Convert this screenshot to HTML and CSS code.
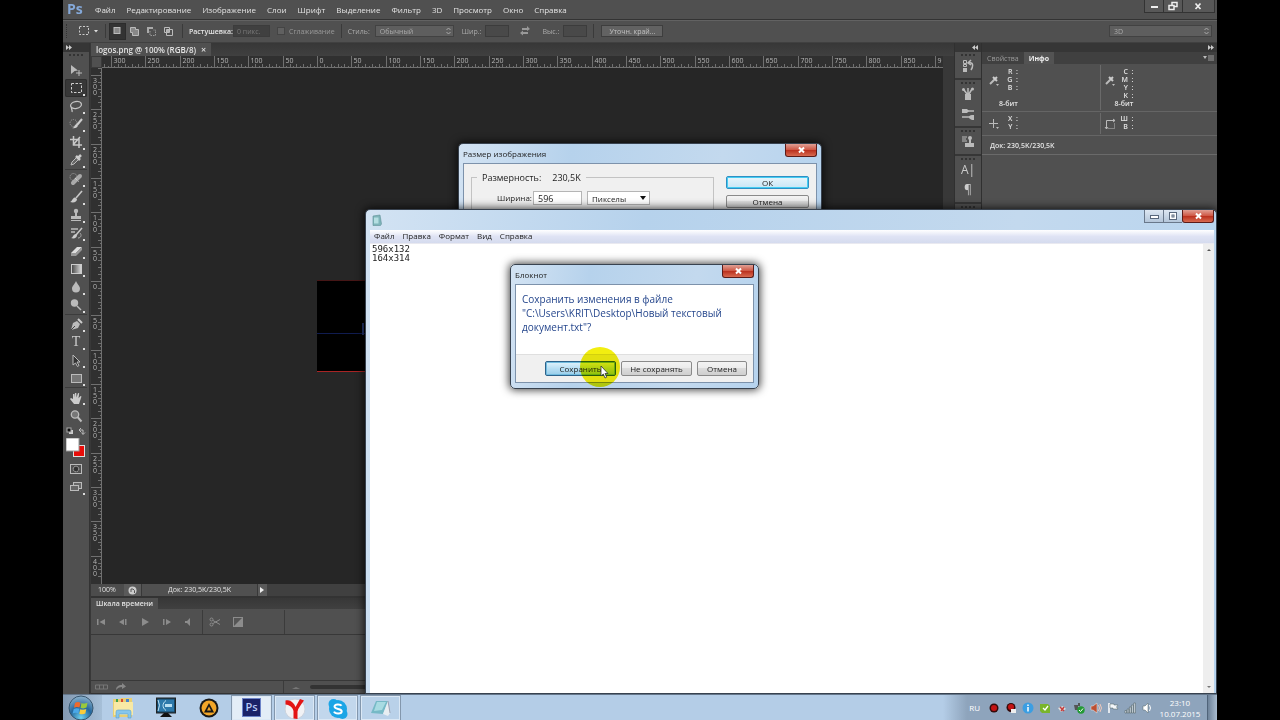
FILE: index.html
```html
<!DOCTYPE html>
<html lang="ru">
<head>
<meta charset="utf-8">
<title>logos.png @ 100% (RGB/8)</title>
<link rel="stylesheet" href="styles.css">
</head>
<body>
<div class="screen">
  <div class="app">
    <header class="menubar">
      <span class="brand">Ps</span>
      <nav class="menus">
        <button>Файл</button><button>Редактирование</button><button>Изображение</button><button>Слои</button><button>Шрифт</button><button>Выделение</button><button>Фильтр</button><button>3D</button><button>Просмотр</button><button>Окно</button><button>Справка</button>
      </nav>
      <div class="app-controls">
        <button aria-label="Свернуть"><svg width="18" height="12"><path d="M6 7h7" stroke="#eee" stroke-width="2"/></svg></button>
        <button aria-label="Восстановить"><svg width="18" height="12" fill="#555" stroke="#eee" stroke-width="1.5"><path d="M8 2.500h5v4h-5z"/><path d="M5 5.500h5v4h-5z"/></svg></button>
        <button class="wide" aria-label="Закрыть"><svg width="20" height="12"><path d="M7.500 3.500l5 5.500M12.500 3.500l-5 5.500" stroke="#eee" stroke-width="1.700"/></svg></button>
      </div>
    </header>

    <div class="options">
      <i class="vgrip"></i>
      <button class="tool-preset" aria-label="Прямоугольная область"><svg width="24" height="12"><rect x="1.500" y="1.500" width="9" height="8" fill="none" stroke="#ccc" stroke-dasharray="2 1.500"/><path d="M16 5h4l-2 2.500z" fill="#ddd"/></svg></button>
      <i class="vsep"></i>
      <div class="modes">
        <button class="on" aria-label="Новая область"><svg width="14" height="14"><rect x="4" y="3.500" width="6" height="6" fill="#888" stroke="#bbb"/></svg></button>
        <button aria-label="Добавить"><svg width="14" height="14" fill="#888" stroke="#bbb"><path d="M3.500 3.500h5v2h3v6h-6v-3h-2z"/></svg></button>
        <button aria-label="Вычесть"><svg width="14" height="14"><path d="M3 3h6v2H5v4H3z" fill="#aaa"/><path d="M6 7v4.500h5.500V6H9" fill="none" stroke="#999" stroke-dasharray="1.500 1"/></svg></button>
        <button aria-label="Пересечение"><svg width="14" height="14" fill="none" stroke="#bbb"><path d="M3.500 3.500h5v5h-5z"/><path d="M5.500 5.500h6v6h-6z"/><path d="M6 6h2v2H6z" fill="#999"/></svg></button>
      </div>
      <i class="vsep"></i>
      <label class="field bright" for="feather">Растушевка:</label><input class="box feather" id="feather" value="0 пикс.">
      <input type="checkbox" class="tick" id="aa"><label class="aa" for="aa">Сглаживание</label>
      <i class="vsep"></i>
      <label for="style">Стиль:</label>
      <span class="pick style-pick"><select id="style"><option>Обычный</option></select><svg width="5" height="8"><path d="M.5 3L2.500 1l2 2M.5 5l2 2 2-2" fill="none" stroke="#aaa"/></svg></span>
      <label class="wlabel" for="w">Шир.:</label><input class="box size" id="w">
      <button class="swap" aria-label="Поменять местами"><svg width="12" height="10" fill="#999"><path d="M3 2h5V0l3 3-3 2V4H3zM9 6H4V4.500L1 7l3 2.500V8h5z"/></svg></button>
      <label for="h">Выс.:</label><input class="box size" id="h">
      <i class="vsep"></i>
      <button class="refine">Уточн. край...</button>
      <span class="pick workspace-pick"><select aria-label="Рабочая среда"><option>3D</option></select><svg width="5" height="8"><path d="M.5 3L2.500 1l2 2M.5 5l2 2 2-2" fill="none" stroke="#aaa"/></svg></span>
    </div>

    <div class="workspace">
      <aside class="tools">
        <div class="strip-head"><svg width="6" height="5" fill="#ccc"><path d="M0 0l3 2.500L0 5zM3 0l3 2.500L3 5z"/></svg></div>
        <i class="grip"></i>
        <button aria-label="Перемещение"><svg width="18" height="18"><path d="M4 4l7 5.500-3.500.5-1 1L4 13z" fill="#bbb"/><path d="M9 12h6M12 9v6" stroke="#bbb"/></svg></button>
        <button class="on more" aria-label="Прямоугольная область"><svg width="18" height="18"><rect x="4.500" y="4.500" width="10" height="9" fill="none" stroke="#d0d0d0" stroke-dasharray="2.500 1.500"/></svg></button>
        <button class="more" aria-label="Лассо"><svg width="18" height="18" fill="none" stroke="#c5c5c5" stroke-width="1.300"><ellipse cx="9" cy="8" rx="5.500" ry="3.500" transform="rotate(-12 9 8)"/><path d="M5 10c-2 1 1 3 0 5"/></svg></button>
        <button class="more" aria-label="Быстрое выделение"><svg width="18" height="18"><circle cx="6.500" cy="8" r="3.500" fill="none" stroke="#aaa" stroke-dasharray="1 1.200"/><path d="M15 4l-5 6" stroke="#ccc" stroke-width="2"/><path d="M5 13c3 0 2-4 5-4 2 2 0 5-5 4z" fill="#ccc"/></svg></button>
        <button class="more" aria-label="Рамка"><svg width="18" height="18" fill="none" stroke="#c8c8c8" stroke-width="1.500"><path d="M6.500 3v9H15M3 6.500h9V15M6 12l7-8"/></svg></button>
        <button class="more" aria-label="Пипетка"><svg width="18" height="18"><path d="M4 14l1-3 5-5 2 2-5 5z" fill="#666" stroke="#bbb"/><path d="M9 5l4 4M11 7l3-3" stroke="#ccc" stroke-width="2.500"/></svg></button>
        <hr>
        <button class="more" aria-label="Восстанавливающая кисть"><svg width="18" height="18"><circle cx="6.500" cy="7" r="3.500" fill="none" stroke="#aaa" stroke-dasharray="1 1"/><path d="M6 13l7-7" stroke="#aaa" stroke-width="4" stroke-linecap="round"/><path d="M8 8l4 4" stroke="#ddd" stroke-dasharray="1 1"/></svg></button>
        <button class="more" aria-label="Кисть"><svg width="18" height="18"><path d="M15 3l-6 7" stroke="#c8c8c8" stroke-width="1.600"/><path d="M3 14c2 0 2-4 5-4.500L10 11c0 3-3 4-7 3z" fill="#ccc"/></svg></button>
        <button class="more" aria-label="Штамп"><svg width="18" height="18" fill="#bbb"><circle cx="9" cy="5" r="2.200"/><path d="M8 6h2v4h4v3H4v-3h4z"/><path d="M4 14h10v1H4z"/></svg></button>
        <button class="more" aria-label="Архивная кисть"><svg width="18" height="18"><path d="M4 5h7M4 8h4" stroke="#bbb" stroke-width="1.500"/><path d="M15 4l-6 7" stroke="#c8c8c8" stroke-width="1.500"/><path d="M4 14c2 0 2-4 5-4l1 1c0 3-3 4-6 3z" fill="#ccc"/><path d="M13 9c2 2 1 5-2 5" fill="none" stroke="#aaa"/></svg></button>
        <button class="more" aria-label="Ластик"><svg width="18" height="18"><path d="M4 11l6-6h5l-6 6z" fill="#ddd"/><path d="M4 11h5v3H4zM9 11l6-6v3l-6 6z" fill="#999"/></svg></button>
        <button class="more" aria-label="Градиент"><svg width="18" height="18"><defs><linearGradient id="gr"><stop stop-color="#444"/><stop offset="1" stop-color="#ddd"/></linearGradient></defs><rect x="4.500" y="4.500" width="10" height="9" fill="url(#gr)" stroke="#ccc"/></svg></button>
        <button class="more" aria-label="Размытие"><svg width="18" height="18"><path d="M9 3c1 3 4 5 4 7.500a4 4 0 0 1-8 0C5 8 8 6 9 3z" fill="#bbb"/></svg></button>
        <button class="more" aria-label="Осветлитель"><svg width="18" height="18"><circle cx="7.500" cy="7" r="3.700" fill="#bbb"/><path d="M10 10l4 4" stroke="#bbb" stroke-width="1.500"/></svg></button>
        <hr>
        <button class="more" aria-label="Перо"><svg width="18" height="18"><path d="M4 15l2-7 4-2 3 3-2 4z" fill="#bbb"/><path d="M4 15l4-4" stroke="#444"/><path d="M11 4l4 4" stroke="#ccc" stroke-width="2"/></svg></button>
        <button class="more glyph" aria-label="Текст">T</button>
        <button class="more" aria-label="Выделение контура"><svg width="18" height="18"><path d="M6 4v10l2.500-2 2 3.500 1.500-1-2-3.500h3z" fill="#333" stroke="#bbb"/></svg></button>
        <button class="more" aria-label="Прямоугольник"><svg width="18" height="18"><rect x="4.500" y="5.500" width="10" height="8" fill="#777" stroke="#bbb"/></svg></button>
        <hr>
        <button class="more" aria-label="Рука"><svg width="18" height="18"><path d="M7 16l-4-5 1-1 2 1V6h1.300v3.500L8 5h1.300l.2 4.500L11 5l1.200.3-.7 5L13.500 8l1 .5L12 16z" fill="#ccc"/></svg></button>
        <button aria-label="Масштаб"><svg width="18" height="18"><circle cx="8" cy="8.500" r="3.700" fill="#777" stroke="#bbb" stroke-width="1.300"/><path d="M10.500 11l4 4.500" stroke="#bbb" stroke-width="2"/></svg></button>
        <div class="mini"><svg width="8" height="8"><rect x="3" y="3" width="4" height="4" fill="#ccc"/><rect x="1" y="1" width="4" height="4" fill="#111" stroke="#aaa"/></svg><svg width="8" height="8"><path d="M2 3h3v4M3 1L1 3l2 2M3.500 5.500l1.500 2 2-2" fill="none" stroke="#bbb"/></svg></div>
        <button class="colors" aria-label="Основной и фоновый цвет"><svg width="20" height="20"><rect x="7.500" y="7.500" width="11" height="11" fill="#e80c08" stroke="#ddd"/><rect x="0" y="0" width="13" height="13" fill="#fff" stroke="#999"/></svg></button>
        <button aria-label="Быстрая маска"><svg width="18" height="18" fill="none" stroke="#bbb"><rect x="3.500" y="4.500" width="11" height="9"/><circle cx="9" cy="9" r="2.800" fill="#333" stroke-dasharray="1.500 .7"/></svg></button>
        <button class="more" aria-label="Режим экрана"><svg width="18" height="18" fill="#666" stroke="#bbb"><rect x="6.500" y="4.500" width="8" height="6"/><rect x="3.500" y="7.500" width="8" height="5"/></svg></button>
      </aside>

      <main class="document">
        <div class="tabs"><div class="tab doc-tab">logos.png @ 100% (RGB/8)<button class="x" aria-label="Закрыть">×</button></div></div>
        <div class="view">
          <i class="corner"></i>
          <svg class="ruler-h" id="rulerH"></svg>
          <svg class="ruler-v" id="rulerV"></svg>
          <div class="canvas"><div class="image"><i class="mark"></i></div></div>
        </div>
        <div class="status">
          <span class="zoomlvl">100%</span>
          <span class="disc"><svg width="9" height="9"><circle cx="4.500" cy="4.500" r="4" fill="#ccc"/><path d="M3 6V3h2l1.500 1.500V7" fill="none" stroke="#555"/></svg></span>
          <span class="docsize">Док: 230,5K/230,5K</span>
          <button class="next" aria-label="Далее"><svg width="6" height="8"><path d="M1 1l4 3-4 3z" fill="#eee"/></svg></button>
        </div>
        <section class="timeline">
          <div class="tabs"><div class="tab">Шкала времени</div></div>
          <div class="transport">
            <button aria-label="В начало"><svg width="10" height="8" fill="#8c8c8c"><path d="M1 1h1.500v6H1zM9 1v6L3.500 4z"/></svg></button>
            <button aria-label="Назад"><svg width="10" height="8" fill="#8c8c8c"><path d="M6 1v6L1 4zM7 1h1.500v6H7z"/></svg></button>
            <button aria-label="Воспроизвести"><svg width="10" height="8" fill="#8c8c8c"><path d="M2 0l7 4-7 4z"/></svg></button>
            <button aria-label="Вперед"><svg width="10" height="8" fill="#8c8c8c"><path d="M1 1h1.500v6H1zM4 1v6l5-3z"/></svg></button>
            <button aria-label="Звук"><svg width="10" height="8" fill="#8c8c8c"><path d="M1 3h2l3-3v8L3 5H1z"/></svg></button>
            <i class="tsep"></i>
            <button aria-label="Разделить"><svg width="12" height="10" fill="none" stroke="#8c8c8c"><path d="M4 3.500l7 4M4 6.500l7-4"/><circle cx="2.500" cy="2.500" r="1.500"/><circle cx="2.500" cy="7.500" r="1.500"/></svg></button>
            <button aria-label="Переход"><svg width="10" height="10"><rect x=".5" y=".5" width="9" height="9" fill="#555" stroke="#8c8c8c"/><path d="M9 1v8H1z" fill="#8c8c8c"/></svg></button>
            <i class="tsep far"></i>
          </div>
          <div class="track"></div>
          <div class="tfoot"><svg width="13" height="6" fill="none" stroke="#777"><path d="M.5 1h12v4H.5zM4.500 1v4M8.500 1v4"/></svg><svg width="10" height="8" fill="#888"><path d="M0 7c0-3 2-5 6-5V0l4 3.500L6 6V4C3 4 2 5 0 7z"/></svg><i class="tsep foot"></i><svg width="8" height="6"><path d="M0 5h8L4 3z" fill="#777"/></svg><i class="slider"></i></div>
        </section>
      </main>

      <aside class="dock">
        <div class="strip-head end"><svg width="6" height="5" fill="#ccc"><path d="M3 0L0 2.500 3 5zM6 0L3 2.500 6 5z"/></svg></div>
        <div class="group"><i class="grip"></i><button aria-label="История"><svg width="18" height="18"><path d="M4.500 3.500h3v3h-3zM4.500 7.500h3v2h-3z" fill="none" stroke="#bbb"/><path d="M4 11h4v4H4z" fill="#bbb"/><path d="M10 6c5-1 4 4 2 7M12 3L9 6l3 2" fill="none" stroke="#bbb" stroke-width="1.500"/></svg></button></div>
        <div class="group"><i class="grip"></i><button aria-label="Кисти"><svg width="18" height="18"><path d="M6 9h6v6H6z" fill="#bbb"/><path d="M8 9L5 5M9 9V3M10 9l3-5" stroke="#bbb" stroke-width="1.500"/><circle cx="4.500" cy="4.500" r="1.500" fill="#bbb"/><circle cx="13.500" cy="4" r="1.500" fill="#bbb"/></svg></button><button aria-label="Наборы кистей"><svg width="18" height="18"><path d="M3 6h12M3 12h12" stroke="#bbb" stroke-width="1.500"/><path d="M3 4h5l2 2-2 2H3zM15 10h-2c-2 0-3 1-3 2s1 3 5 3z" fill="#bbb"/></svg></button></div>
        <div class="group"><i class="grip"></i><button aria-label="Источник клонов"><svg width="18" height="18"><path d="M3 4h5M3 6h4M3 8h5" stroke="#bbb"/><circle cx="11" cy="5" r="2" fill="#bbb"/><path d="M10 5h2v5h3v4H6v-4h4z" fill="#bbb"/></svg></button></div>
        <div class="group"><i class="grip"></i><button class="ch" aria-label="Символ">A|</button><button class="ch" aria-label="Абзац">¶</button></div>
        <div class="group"><i class="grip"></i></div>
      </aside>

      <aside class="panels">
        <div class="strip-head end"><svg width="6" height="5" fill="#ccc"><path d="M0 0l3 2.500L0 5zM3 0l3 2.500L3 5z"/></svg></div>
        <div class="ptabs"><button>Свойства</button><button class="on">Инфо</button><svg width="12" height="6"><path d="M0 1h4L2 4z" fill="#bbb"/><path d="M5 1h6M5 3h6M5 5h6" stroke="#999"/></svg></div>
        <div class="info tall">
          <div class="cell"><svg width="12" height="12"><path d="M2 9l5-5" stroke="#bbb" stroke-width="2"/><path d="M5 2l4 4M7 4l2-2" stroke="#ccc" stroke-width="2"/><path d="M8 9h3l-1.500 2z" fill="#bbb"/></svg><div class="vals"><span>R&nbsp; :</span><span>G&nbsp; :</span><span>B&nbsp; :</span></div><b>8-бит</b></div>
          <div class="cell"><svg width="12" height="12"><path d="M2 9l5-5" stroke="#bbb" stroke-width="2"/><path d="M5 2l4 4M7 4l2-2" stroke="#ccc" stroke-width="2"/><path d="M8 9h3l-1.500 2z" fill="#bbb"/></svg><div class="vals"><span>C&nbsp; :</span><span>M&nbsp; :</span><span>Y&nbsp; :</span><span>K&nbsp; :</span></div><b>8-бит</b></div>
        </div>
        <div class="info short">
          <div class="cell"><svg width="12" height="12"><path d="M5.500 1v9M1 5.500h9" stroke="#bbb"/><path d="M8 9h3l-1.500 2z" fill="#bbb"/></svg><div class="vals"><span>X&nbsp; :</span><span>Y&nbsp; :</span></div></div>
          <div class="cell"><svg width="12" height="12" fill="none" stroke="#bbb"><path d="M2.500 11V2.500H11M1 9l1.500 2L4 9M9 1l2 1.500L9 4"/><path d="M4.500 10.500h6v-6" stroke-dasharray="1 1"/></svg><div class="vals"><span>Ш&nbsp; :</span><span>В&nbsp; :</span></div></div>
        </div>
        <div class="doc">Док: 230,5K/230,5K</div>
      </aside>
    </div>
  </div>

  <section class="win resize-win">
    <header class="title"><span>Размер изображения</span><button class="close" aria-label="Закрыть"><svg width="9" height="8"><path d="M2 1.500l5 5M7 1.500l-5 5" stroke="#fff" stroke-width="2"/></svg></button></header>
    <div class="body resize-body">
      <fieldset><legend>Размерность:<span>230,5K</span></legend>
        <label for="width">Ширина:</label><input id="width" value="596">
        <span class="unit"><select aria-label="Единицы"><option>Пикселы</option></select><svg width="6" height="4"><path d="M0 0h6L3 4z" fill="#111"/></svg></span>
      </fieldset>
      <div class="side"><button class="btn default">ОК</button><button class="btn">Отмена</button></div>
    </div>
  </section>

  <section class="win notepad">
    <header class="title">
      <svg width="10" height="12"><path d="M1 2l7-1 1.500 9-1 1.500H1z" fill="#7fb5ba" stroke="#5f9097" stroke-width=".6"/><path d="M2 3.500h4.500v6H2z" fill="#b5dfe2"/></svg>
      <div class="controls"><button aria-label="Свернуть"><svg width="18" height="12"><rect x="5.500" y="5.500" width="8" height="3" fill="#fff" stroke="#59687c"/></svg></button><button aria-label="Развернуть"><svg width="18" height="12"><rect x="5.500" y="2.500" width="7" height="7" fill="#fff" stroke="#59687c"/><rect x="8" y="5" width="2" height="2" fill="none" stroke="#59687c"/></svg></button><button class="close" aria-label="Закрыть"><svg width="9" height="8"><path d="M2 1.500l5 5M7 1.500l-5 5" stroke="#fff" stroke-width="2"/></svg></button></div>
    </header>
    <nav class="nmenu"><button>Файл</button><button>Правка</button><button>Формат</button><button>Вид</button><button>Справка</button></nav>
    <div class="edit"><textarea aria-label="Текст" spellcheck="false">596x132
164x314</textarea>
      <div class="scroll"><svg width="6" height="4"><path d="M1 3h4L3 1z" fill="#555"/></svg><svg width="6" height="4"><path d="M1 1h4L3 3z" fill="#777"/></svg></div></div>
  </section>

  <section class="win save-win">
    <header class="title"><span>Блокнот</span><button class="close" aria-label="Закрыть"><svg width="9" height="8"><path d="M2 1.500l5 5M7 1.500l-5 5" stroke="#fff" stroke-width="2"/></svg></button></header>
    <div class="body">
      <p>Сохранить изменения в файле "C:\Users\KRIT\Desktop\Новый текстовый документ.txt"?</p>
      <footer><button class="btn hot">Сохранить</button><button class="btn">Не сохранять</button><button class="btn cancel">Отмена</button></footer>
    </div>
  </section>
  <div class="halo"></div>
  <svg class="cursor" width="9" height="14"><path d="M1 1v10l2.300-2 1.700 4 1.700-.8L5 8.500h3z" fill="#fff" stroke="#333" stroke-width=".8"/></svg>

  <footer class="taskbar">
    <button class="start" aria-label="Пуск"><svg width="26" height="26"><defs><radialGradient id="orb" cx=".5" cy=".9" r=".9"><stop stop-color="#6fd2f0"/><stop offset=".5" stop-color="#23679e"/><stop offset="1" stop-color="#8fb3cd"/></radialGradient></defs><circle cx="13" cy="13" r="12" fill="url(#orb)" stroke="#37566f"/><path d="M7 8c2-1.500 4-1 5.500-.3l-1 4.800c-2-.8-3.500-.8-5.500.3z" fill="#ee6a2c"/><path d="M13.500 8c2 .9 4 .8 6-.2l-1 4.800c-2 1-4 1-6 .2z" fill="#9ac93c"/><path d="M5.700 14c2-1 3.800-1 5.600-.2l-1 4.500c-2-.8-4-.7-5.600.3z" fill="#4aa8e8"/><path d="M12.300 14.200c2 .8 4 .8 6-.1l-1 4.500c-2 1-4 .9-6 .1z" fill="#fbcc3a"/></svg></button>
    <button class="task" aria-label="Проводник"><svg width="26" height="26"><path d="M3 4h7l1-1h11v19H3z" fill="#e9cf72"/><path d="M4 7h19v13H4z" fill="#f8e9a5"/><path d="M6 4h2v3H6z" fill="#3fa34d"/><path d="M11 4h2v3h-2z" fill="#d94a34"/><path d="M16 4h3v3h-3z" fill="#4787ce"/><path d="M6 23v-6q0-2 2-2h11q2 0 2 2v6h-3v-4H9v4z" fill="#86c6ec" stroke="#5aa0cc" stroke-width=".6"/></svg></button>
    <button class="task" aria-label="Монитор"><svg width="26" height="26"><rect x="3.500" y="3" width="19" height="15" fill="#17425f" stroke="#222"/><rect x="5" y="4.500" width="16" height="12" fill="#2d79ab"/><path d="M5 5q3 5 0 11M13 5.500c-4 3-4 7 0 10" fill="none" stroke="#bfe3f5"/><path d="M12 9h7v3h-7z" fill="#b9dff2"/><path d="M11 18h4l4 4H7z" fill="#111"/></svg></button>
    <button class="task" aria-label="AIMP"><svg width="26" height="26"><circle cx="13" cy="13" r="9.500" fill="#181818"/><circle cx="13" cy="13" r="7.500" fill="#f2a629"/><path d="M8 17.500L13 8l5 9.500z" fill="#171717"/><path d="M11 15.500l2-4 2 4z" fill="#f2a629"/></svg></button>
    <button class="task open active" aria-label="Photoshop"><span class="psicon">Ps</span></button>
    <button class="task open" aria-label="Yandex"><svg width="26" height="26"><circle cx="13" cy="13" r="10" fill="#f1f2f5" stroke="#cbd3dd"/><path d="M3.500 4.500C9 3 12.500 8 13.500 11L18 3l4 1.500c-3 4-6 8-6.500 11V23l-4-.5V15C11 12 8 9 3.500 8.500z" fill="#e31515"/></svg></button>
    <button class="task open" aria-label="Skype"><svg width="26" height="26"><circle cx="13" cy="13" r="9" fill="#1aa5e6"/><circle cx="8.500" cy="8" r="5" fill="#1aa5e6"/><circle cx="17.500" cy="18" r="5" fill="#1aa5e6"/><path d="M16.500 9.800c-1-2-7-2-7 .8 0 3 7.200 1.600 7.200 4.700 0 3-6.500 3-7.700.4" fill="none" stroke="#fff" stroke-width="2"/></svg></button>
    <button class="task open note" aria-label="Блокнот"><svg width="26" height="26"><path d="M8 5h12l-5 13-12-1z" fill="#76b9c6"/><path d="M9 6h9l-4 8-8 1z" fill="#a8dbe2"/><path d="M20 5l2 12-2 3-5-2z" fill="#e8eef2"/><path d="M20 5l2 12" stroke="#889" stroke-width=".7"/></svg></button>
    <div class="tray">
      <span class="lang">RU</span>
      <div class="icons">
        <svg width="12" height="12"><circle cx="6" cy="6" r="4.500" fill="#350a0a"/><circle cx="6" cy="6" r="3" fill="#c31313"/></svg>
        <svg width="12" height="12"><circle cx="6" cy="5.500" r="4.500" fill="#350a0a"/><circle cx="6" cy="5" r="3" fill="#c31313"/><path d="M6 7h5v4H6z" fill="#eee"/></svg>
        <svg width="12" height="12"><circle cx="6" cy="6" r="5.500" fill="#3b9ee2"/><path d="M6 2.500v1.500M6 5v4.500" stroke="#fff" stroke-width="1.500"/></svg>
        <svg width="12" height="12"><path d="M1 2h8l2 2v7H3L1 9z" fill="#79b52b"/><path d="M4 6l2 2 3-4" fill="none" stroke="#fff" stroke-width="1.300"/></svg>
        <svg width="12" height="12"><path d="M2 6l5-2 3 3-5 3z" fill="#ddd"/><path d="M4 5l4 4M8 5L5 9" stroke="#c63e3e" stroke-width="1.500"/></svg>
        <svg width="12" height="12"><path d="M1 3h4V1h2v3H5v4H2z" fill="#555"/><circle cx="8" cy="8" r="3.700" fill="#239a35"/><path d="M6 8l1.500 1.500L10 6.500" fill="none" stroke="#fff"/></svg>
        <svg width="12" height="12"><path d="M1 4h2l4-3v10L3 8H1z" fill="#bc4f32" stroke="#eee" stroke-width=".5"/><path d="M8.500 3q2 3 0 6M10 2q3 4 0 8" fill="none" stroke="#f0c8ba"/></svg>
        <svg width="12" height="12"><path d="M2 1v10" stroke="#fff" stroke-width="1.500"/><path d="M3 2h4v1h4L9.500 5 11 7H6V6H3z" fill="#f4f7fa" stroke="#566" stroke-width=".5"/></svg>
        <svg width="12" height="12" fill="#dbe3ec" stroke="#455" stroke-width=".5"><path d="M1 8.500h1.600V11H1zM3.200 7h1.600v4H3.200zM5.400 5H7v6H5.400zM7.600 3h1.600v8H7.600zM9.800 1h1.600v10H9.800z"/></svg>
        <svg width="12" height="12"><path d="M2 4h2l3-3v10L4 8H2z" fill="#fff" stroke="#566" stroke-width=".5"/><path d="M8.500 3q2 3 0 6" fill="none" stroke="#fff"/></svg>
      </div>
      <div class="clock"><span>23:10</span><span>10.07.2015</span></div>
      <button class="show" aria-label="Свернуть все окна"></button>
    </div>
  </footer>
</div>
<script src="rulers.js"></script>
</body>
</html>
```
FILE: styles.css
```css
* { box-sizing: border-box; }
body { margin: 0; background: #000; font-family: "Open Sans", "Noto Sans", sans-serif; font-size: 8px; }
button, input, select, textarea { font: inherit; color: inherit; margin: 0; padding: 0; border: 0; background: none; border-radius: 0; appearance: none; outline: none; }
svg { display: block; flex: none; }
i { display: block; flex: none; }
.screen { position: relative; margin: 0 63px; min-height: 100vh; display: flex; flex-direction: column; overflow: hidden; }
.app { flex: 1; display: flex; flex-direction: column; background: #505050; color: #e2e2e2; }

.menubar { display: flex; height: 20px; border-bottom: 1px solid #333; }
.brand { width: 32px; padding-left: 4px; font: bold 14px/18px "Open Sans", sans-serif; color: #84a8d8; }
.menus { display: flex; flex: 1; gap: 11px; align-items: center; font-size: 8px; }
.app-controls { display: flex; height: 13px; margin-right: 2px; border: 1px solid #333; border-top: 0; }
.app-controls button { width: 19px; border-right: 1px solid #333; background: #585858; }
.app-controls .wide { width: 31px; padding-left: 5px; border-right: 0; }

.options { display: flex; align-items: center; height: 23px; padding-bottom: 1px; border-top: 1px solid #626262; border-bottom: 1px solid #404040; font-size: 7px; color: #aaa; }
.vgrip { width: 3px; height: 14px; margin: 0 9px 0 3px; border-left: 1px dotted #333; }
.tool-preset { width: 27px; }
.vsep { width: 1px; height: 14px; background: #3a3a3a; }
.modes { display: flex; gap: 2px; margin: 0 6px 0 4px; }
.modes button { width: 15px; height: 15px; }
.modes .on { background: #333; box-shadow: 0 0 0 1px #2c2c2c; }
.vsep + label { margin-left: 6px; }
.field { width: 44px; white-space: nowrap; }
.bright { color: #e5e5e5; font-weight: 600; }
.box { height: 12px; border: 1px solid #3c3c3c; background: #494949; color: #777; padding-left: 3px; }
.feather { width: 37px; background: #404040; }
.tick { width: 8px; height: 8px; margin: 0 4px 0 7px; background: #606060; border: 1px solid #444; }
.aa { margin-right: 6px; color: #999; }
.pick { position: relative; display: block; margin-left: 5px; }
.pick select { display: block; width: 100%; height: 12px; padding-left: 4px; border: 1px solid #424242; background: #5e5e5e; }
.pick svg { position: absolute; right: 3px; top: 2px; }
.style-pick { width: 79px; }
.wlabel { margin-left: 8px; }
.size { width: 24px; margin-left: 4px; }
.swap { margin: 0 11px 0 10px; }
.size + .vsep { margin: 0 7px 0 6px; }
.refine { width: 62px; height: 12px; border: 1px solid #3e3e3e; background: #626262; color: #c0c0c0; }
.workspace-pick { width: 103px; margin: 0 5px 0 auto; }

.workspace { flex: 1; display: flex; background: #383838; }
.strip-head { height: 9px; padding: 2px 3px; background: #363636; flex: none; }
.strip-head.end { display: flex; justify-content: flex-end; }
.grip { width: 14px; height: 3px; margin: 2px auto; border-top: 2px dotted #333; }
.tools { width: 27px; display: flex; flex-direction: column; align-items: center; background: #505050; border-right: 1px solid #333; }
.tools .strip-head { width: 100%; }
.tools .grip { margin-bottom: 4px; }
.tools button { position: relative; width: 22px; height: 18px; padding-left: 2px; flex: none; }
.tools .on { background: #383838; border-radius: 2px; box-shadow: inset 0 0 0 1px #2e2e2e; }
.tools .more::after { content: ""; position: absolute; right: 2px; bottom: 1px; width: 2px; height: 2px; background: #ddd; }
.tools hr { width: 22px; height: 1px; margin: 0; border: 0; background: #3c3c3c; flex: none; }
.tools .glyph { font: 14px/18px "Liberation Serif", serif; color: #ccc; text-align: center; padding: 0; }
.mini { display: flex; gap: 4px; height: 13px; align-items: center; }
.tools .colors { height: 20px; margin: 1px 0 2px; padding-left: 1px; }

.document { flex: 1; min-width: 0; display: flex; flex-direction: column; padding-left: 1px; }
.tabs { display: flex; flex: none; height: 13px; background: linear-gradient(#373737, #404040); }
.tab { display: flex; padding: 0 5px; align-items: center; gap: 5px; background: #505050; font-size: 7px; font-weight: 600; white-space: nowrap; }
.doc-tab { font-size: 8px; }
.tab .x { font-size: 9px; line-height: 10px; }
.view { flex: 1; display: grid; grid-template: 12px 1fr / 11px 1fr; margin-right: 11px; }
.corner { background: #505050; border: 1px solid #3a3a3a; }
.ruler-h, .ruler-v { background: #303030; width: 100%; height: 100%; font-size: 7px; fill: #b5b5b5; overflow: hidden; }
.ruler-v text { text-anchor: middle; }
.canvas { position: relative; background: #262626; overflow: hidden; }
.image { position: absolute; left: 215px; top: 212px; width: 409px; height: 92px; background: linear-gradient(#000 52px, #101c50 52px, #101c50 53px, #000 53px); border-top: 1px solid #461616; border-bottom: 1px solid #a82424; }
.mark { width: 2px; height: 12px; margin: 42px 0 0 45px; background: #25366e; }
.status { display: flex; height: 14px; border-bottom: 2px solid #333; background: #404040; font-size: 7px; line-height: 12px; flex: none; }
.zoomlvl { width: 33px; padding-left: 7px; background: #4c4c4c; }
.disc { width: 17px; padding: 2px 4px; background: #5a5a5a; }
.docsize { width: 117px; text-align: center; background: #505050; border-left: 1px solid #383838; border-right: 1px solid #383838; }
.next { width: 9px; background: #5a5a5a; padding: 0 1px; }
.timeline { flex: none; display: flex; flex-direction: column; background: #505050; }
.timeline .tabs { height: 11px; }
.transport { display: flex; align-items: center; height: 26px; padding-left: 5px; gap: 12px; border-bottom: 1px solid #383838; }
.transport button { height: 10px; }
.tsep { width: 1px; height: 24px; background: #3b3b3b; }
.transport .tsep { margin: 0 -6px 0 -4px; }
.transport .tsep.far { margin-left: 29px; }
.track { height: 45px; }
.tfoot { display: flex; align-items: center; height: 14px; padding-left: 4px; gap: 8px; border-top: 1px solid #383838; border-bottom: 1px solid #333; }
.tsep.foot { height: 12px; margin-left: 149px; }
.slider { flex: 1; height: 4px; margin-left: 2px; border-radius: 2px; background: #333; }

.dock { width: 28px; background: #505050; border-left: 1px solid #303030; border-right: 1px solid #303030; flex: none; }
.group { padding-bottom: 2px; border-bottom: 2px solid #363636; }
.group .grip { height: 4px; margin: 0 auto; border-top: 0; border-bottom: 2px dotted #333; }
.dock button { display: block; width: 20px; height: 20px; margin: 0 auto; padding-left: 1px; }
.dock .ch { font: 12px/20px "Open Sans", sans-serif; color: #ccc; padding: 0; white-space: nowrap; }
.dock .group:last-child { padding-bottom: 0; border: 0; }
.panels { width: 235px; background: #505050; flex: none; }
.ptabs { display: flex; align-items: center; height: 12px; background: #404040; font-size: 7px; color: #999; }
.ptabs button { height: 12px; padding: 0 5px; }
.ptabs .on { background: #535353; color: #eee; font-weight: bold; }
.ptabs svg { margin-left: auto; margin-right: 2px; }
.info { display: grid; grid-template-columns: 1fr 1fr; padding: 1px 0; border-bottom: 1px solid #656565; }
.tall { height: 48px; }
.short { height: 24px; }
.cell { display: grid; grid-template: 32px 8px / 12px 1fr; column-gap: 4px; padding: 3px 0 0 6px; font-size: 7px; line-height: 8px; font-weight: 600; }
.cell + .cell { border-left: 1px solid #6a6a6a; padding-left: 3px; }
.cell svg { margin-top: 7px; }
.short .cell { padding-top: 2px; grid-template-rows: 1fr; }
.short svg { margin-top: 3px; }
.vals { display: flex; flex-direction: column; text-align: right; width: 14px; height: 32px; white-space: nowrap; }
.short .vals { height: 16px; }
.cell b { grid-column: 1 / 3; padding-left: 11px; font-weight: 600; }
.doc { padding: 4px 8px; height: 19px; line-height: 11px; font-size: 7px; font-weight: 600; border-bottom: 1px solid #6a6a6a; }

.win { position: absolute; display: flex; flex-direction: column; padding: 0 4px 5px; background: linear-gradient(100deg, #d3e3f3, #b6d2ec 30%, #c3d9ee 70%, #b6d3ee); border: 1px solid #38424f; border-radius: 5px 5px 0 0; color: #1d1d1d; box-shadow: 0 0 8px 1px rgba(0, 0, 0, .75); }
.title { display: flex; align-items: center; justify-content: space-between; height: 19px; flex: none; font-size: 8px; }
.close { width: 32px; height: 13px; padding-left: 11px; align-self: flex-start; border: 1px solid #5b1b18; border-top: 0; border-radius: 0 0 3px 3px; background: linear-gradient(#e0a095, #cf5845 48%, #b92e1c 50%, #d86a50); }
.body { flex: 1; display: flex; background: #f0f0f0; border: 1px solid #7d92ab; }
.btn { height: 15px; padding: 0; border: 1px solid #8a8a8a; border-radius: 2px; background: linear-gradient(#f3f3f3, #ebebeb 50%, #dcdcdc 50%, #cfcfcf); font-size: 8px; line-height: 12px; }
.btn.default { border-color: #2f8fc4; box-shadow: inset 0 0 0 1px #45cdf2; background: linear-gradient(#e8f5fc, #c9e6f5); }
.btn.hot { border-color: #2c628b; box-shadow: inset 0 0 0 1px #72bcdf; background: linear-gradient(#e2f3fc, #b8dff4 50%, #98cdea); }

.resize-win { left: 395px; top: 143px; width: 364px; height: 100px; }
.resize-body { padding: 8px 7px; gap: 12px; }
.resize-body fieldset { flex: 1; display: flex; align-items: flex-start; height: 70px; margin: 0; padding: 8px 0 0 25px; border: 1px solid #c3c3c3; font-size: 9px; line-height: 13px; }
legend { margin-left: -20px; padding: 0 5px; line-height: 11px; }
legend span { margin-left: 11px; }
fieldset label { width: 36px; font-size: 8px; }
fieldset input { width: 49px; height: 14px; padding-left: 4px; border: 1px solid #b5b5b5; background: #fff; }
.unit { position: relative; margin-left: 5px; }
.unit select { display: block; width: 63px; height: 14px; padding-left: 4px; border: 1px solid #b5b5b5; background: #fff; font-size: 8px; }
.unit svg { position: absolute; right: 4px; top: 5px; }
.side { display: flex; flex-direction: column; width: 83px; gap: 6px; padding-top: 4px; }
.side .btn { height: 13px; line-height: 10px; }

.notepad { left: 302px; right: 0; top: 209px; bottom: 26px; padding: 0 2px 0 4px; }
.notepad .title { height: 20px; }
.notepad .title > svg { margin-left: 2px; }
.controls { display: flex; align-self: flex-start; height: 13px; }
.controls button { width: 19px; border: 1px solid #69788b; border-top: 0; border-right: 0; background: linear-gradient(#dde7f2, #b4c6da); }
.controls .close { width: 32px; border: 1px solid #5b1b18; border-top: 0; background: linear-gradient(#e0a095, #cf5845 48%, #b92e1c 50%, #d86a50); }
.nmenu { display: flex; align-items: flex-start; gap: 8px; height: 14px; flex: none; padding-left: 4px; background: linear-gradient(#fff, #dfe3f4 50%, #d5dbee); border-bottom: 1px solid #e9e9f0; font-size: 8px; line-height: 12px; }
.edit { flex: 1; display: flex; background: #fff; }
.edit textarea { flex: 1; padding: 1px 2px; resize: none; font: 9px/9px "DejaVu Sans Mono", monospace; color: #222; overflow: hidden; }
.scroll { display: flex; flex-direction: column; justify-content: space-between; align-items: center; width: 11px; padding: 4px 0; background: #eee; }

.save-win { left: 447px; top: 264px; width: 249px; height: 125px; border-radius: 5px; }
.save-win .body { flex-direction: column; background: #fff; }
.save-win p { flex: 1; margin: 0; padding: 7px 6px; font-size: 10px; line-height: 14px; color: #26478d; }
.save-win footer { display: flex; justify-content: flex-end; gap: 5px; padding: 6px; background: #f0f0f0; border-top: 1px solid #dfdfdf; }
.save-win .btn { width: 71px; }
.save-win .cancel { width: 50px; }
.halo { position: absolute; left: 517px; top: 347px; width: 40px; height: 40px; border-radius: 50%; background: #f2ee10; mix-blend-mode: multiply; }
.cursor { position: absolute; left: 537px; top: 365px; }

.taskbar { position: relative; display: flex; height: 26px; flex: none; border-top: 1px solid #65778b; background: #b4cde7; overflow: hidden; }
.start { width: 39px; padding-left: 5px; background: linear-gradient(90deg, #8299b2, #a6bfd8); }
.task { width: 41px; margin-right: 2px; display: flex; justify-content: center; }
.open { border: 1px solid #8397ad; border-bottom: 0; box-shadow: inset 0 0 0 1px #dbe8f5; background: #c2d7ec; }
.active { background: #e3edf7; }
.note { background: #b9d1e9; }
.psicon { width: 19px; height: 19px; margin-top: 2px; border: 1px solid #6c83c8; background: #1a2268; color: #b6c8f6; font-size: 11px; line-height: 16px; font-weight: 600; }
.tray { display: flex; align-items: center; margin-left: auto; padding-left: 26px; background: linear-gradient(90deg, #b4cde7, #8ea4bc 24px); color: #fff; }
.lang { margin-right: 8px; }
.icons { display: flex; gap: 5px; }
.clock { display: flex; flex-direction: column; align-items: center; width: 42px; margin: 0 6px 0 6px; line-height: 11px; }
.show { width: 10px; height: 25px; background: linear-gradient(90deg, #6d8299, #a9bccf); border-left: 1px solid #50647a; }
```
FILE: rulers.js
```js
const NS = 'http://www.w3.org/2000/svg';
const SCALE = 103 / 150;

function add(parent, tag, attrs, text) {
  const node = document.createElementNS(NS, tag);
  for (const key in attrs) node.setAttribute(key, attrs[key]);
  if (text) node.textContent = text;
  parent.appendChild(node);
  return node;
}

function ruler(svg, origin, from, to, vertical) {
  const depth = vertical ? 11 : 12;
  let d = vertical ? 'M10.5 0V2000' : 'M0 11.5H3000';
  for (let v = from; v <= to; v += 5) {
    const p = Math.round(origin + v * SCALE) + 0.5;
    const len = v % 50 === 0 ? depth : v % 10 === 0 ? 4 : 2;
    d += vertical ? `M${depth} ${p}h-${len}` : `M${p} ${depth}v-${len}`;
    if (v % 50 === 0) {
      const label = String(Math.abs(v));
      if (vertical) {
        const text = add(svg, 'text', {});
        [...label].forEach((c, i) => add(text, 'tspan', { x: 4, y: p + 7 + i * 6 }, c));
      } else {
        add(svg, 'text', { x: p + 2, y: 7 }, v === 900 ? '9' : label);
      }
    }
  }
  add(svg, 'path', { d, stroke: '#707070', fill: 'none' });
}

ruler(document.getElementById('rulerH'), 215, -310, 905, false);
ruler(document.getElementById('rulerV'), 213, -310, 430, true);
```
